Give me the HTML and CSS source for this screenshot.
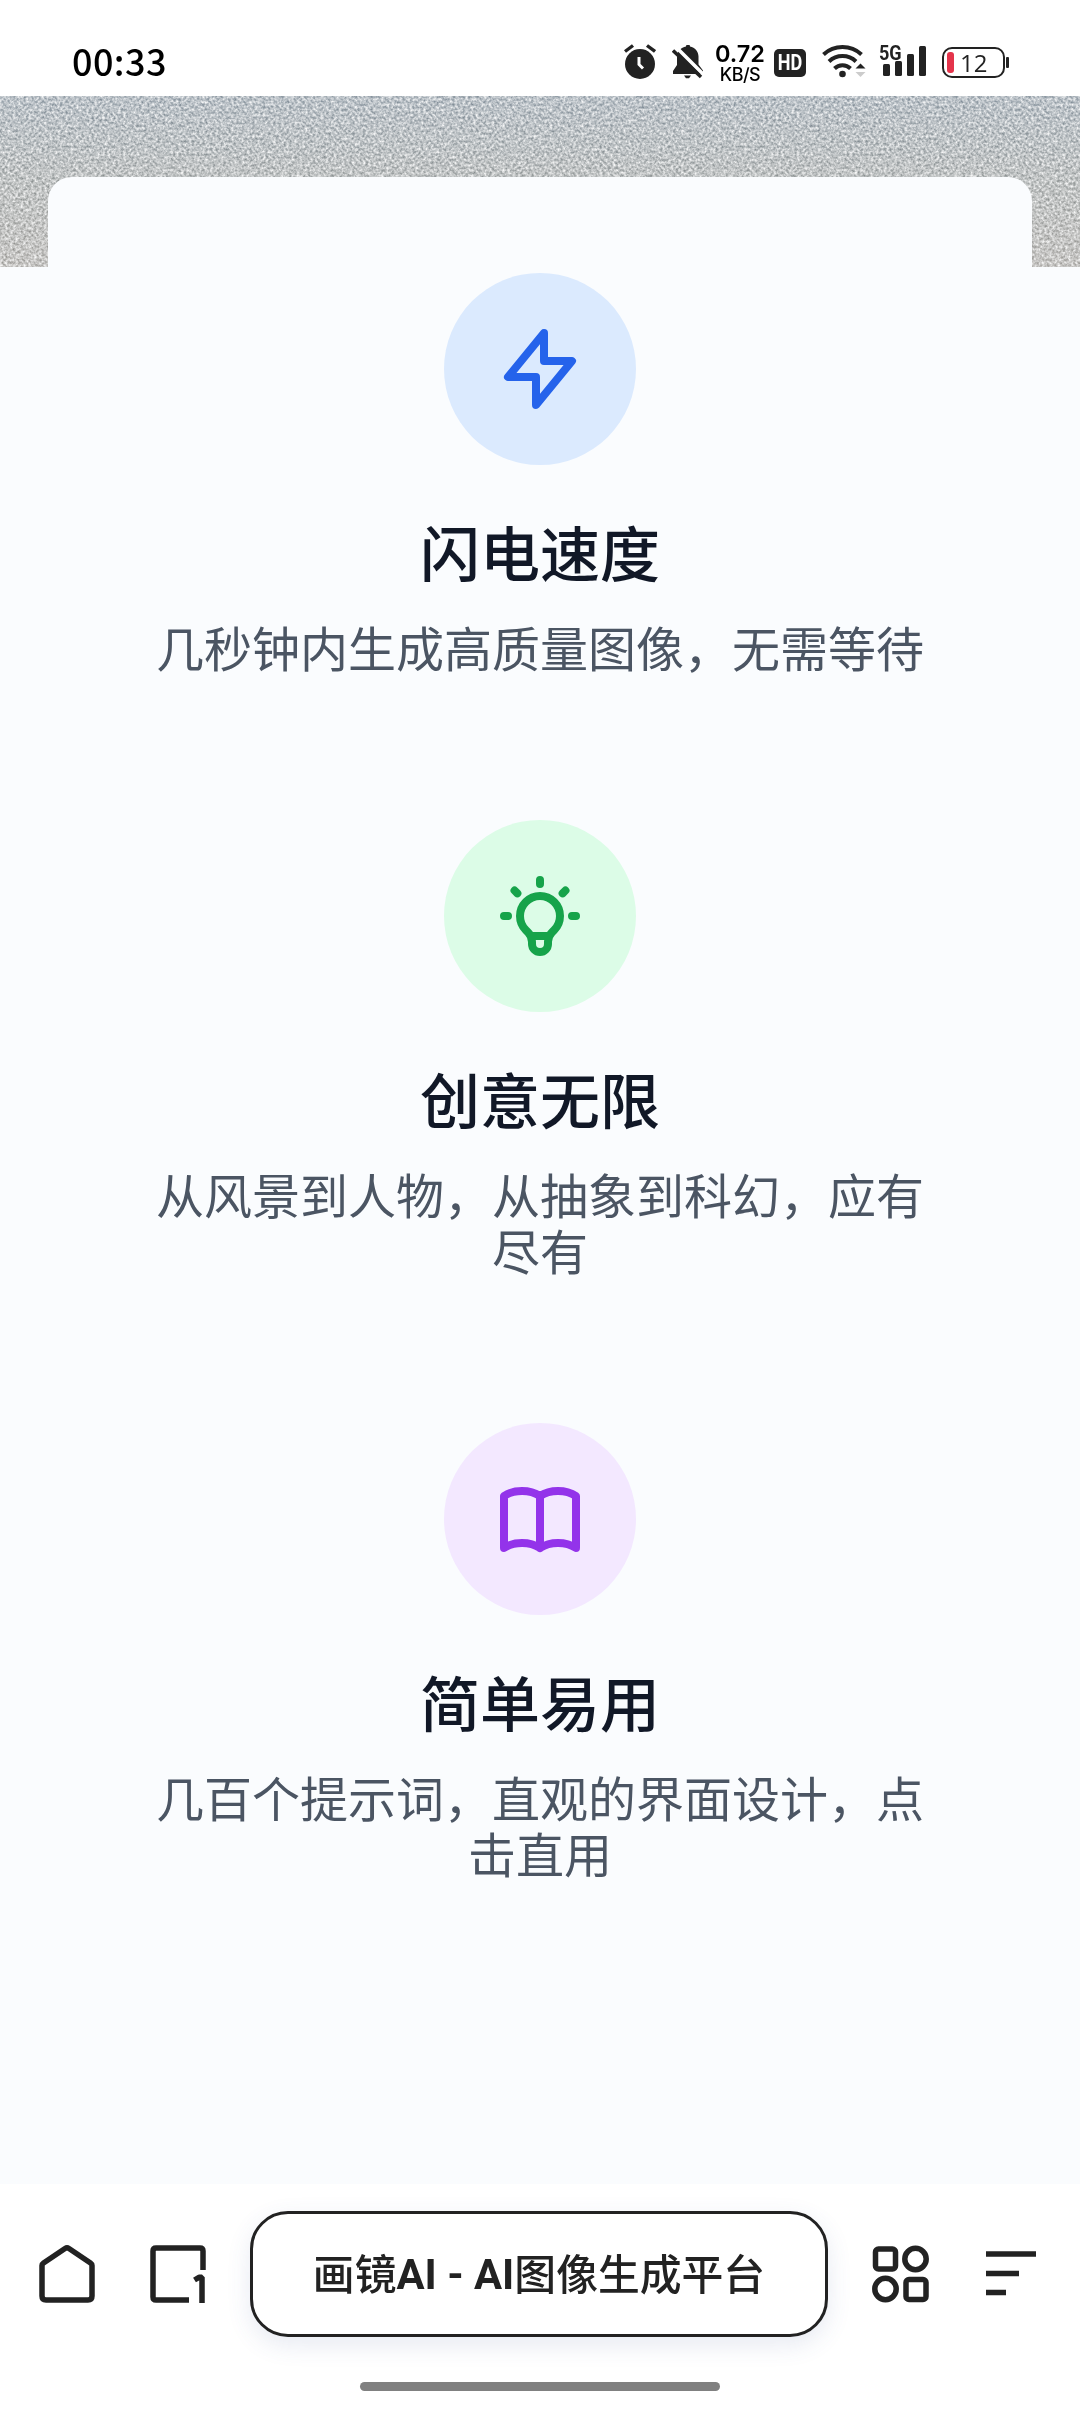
FILE: index.html
```html
<!DOCTYPE html>
<html lang="zh-CN">
<head>
<meta charset="utf-8">
<title>画镜AI - AI图像生成平台</title>
<link rel="stylesheet" href="styles.css">
</head>
<body>
<div class="screen">
  <header class="status">
    <time class="clock">00:33</time>
    <div class="indicators">
      <svg class="alarm" width="32" height="36" viewBox="0 0 32 36" fill="none" stroke="#222" stroke-width="3.4"><circle cx="16" cy="20" r="15" fill="#222" stroke="none"/><path d="M1 7.5 9 1.5M31 7.5l-8-6"/><path d="M15 13v7.5l4 4" stroke="#fff" stroke-width="3"/></svg>
      <svg class="bell" width="32" height="34" viewBox="0 0 32 34" fill="#222"><path d="M14 1.5a2 2 0 0 1 4 0c5 1 8.500 5 8.500 10v8l4.500 6V29H1v-3l4-6v-8c0-5.500 4-9.500 9-10.500z"/><path d="M12 30.500h7l-2 2.800h-3z"/><path d="M0 3 31 34" stroke="#fff" stroke-width="3.500" transform="translate(2 -3)"/><path d="M1 5.500 29 32" stroke="#222" stroke-width="3.500"/></svg>
      <div class="speed"><span class="rate">0.72</span><span class="unit">KB/S</span></div>
      <span class="hd"><span>HD</span></span>
      <svg class="wifi" width="46" height="36" viewBox="0 0 46 36" fill="none" stroke="#222" stroke-width="4"><path d="M1.500 11.500a28 28 0 0 1 38 0M7 18.500a19.500 19.500 0 0 1 27 0M12.500 25.500a11.500 11.500 0 0 1 16 0"/><circle cx="20.500" cy="31" r="3.300" fill="#222" stroke="none"/><path d="m33.500 25.500 5-5 5 5z" fill="#222" stroke="none"/><path d="m33.500 29 5 5 5-5z" fill="#ccc" stroke="none"/></svg>
      <div class="signal"><span class="net">5G</span>
        <svg width="44" height="32" viewBox="0 0 44 32" fill="#222"><rect x="0" y="19" width="7" height="12" rx="1.500"/><rect x="12" y="16" width="7" height="15" rx="1.500"/><rect x="24" y="9" width="7" height="22" rx="1.500"/><rect x="36" y="1" width="7" height="30" rx="1.500"/></svg>
      </div>
      <div class="battery"><span class="level"></span><span class="pct">12</span></div>
      <span class="battery-tip"></span>
    </div>
  </header>

  <main class="page">
    <svg class="grain" width="1080" height="171" aria-hidden="true">
      <defs>
        <linearGradient id="tone" x1="0" y1="0" x2="0" y2="1"><stop offset="0" stop-color="#bac1c7"/><stop offset=".5" stop-color="#c0c3c3"/><stop offset="1" stop-color="#c6c5c3"/></linearGradient>
        <filter id="noise" x="0" y="0" width="100%" height="100%" color-interpolation-filters="sRGB"><feTurbulence type="fractalNoise" baseFrequency=".38" numOctaves="2" seed="7"/><feColorMatrix values="1.5 0 0 0 -.23  1.5 0 0 0 -.23  1.5 0 0 0 -.23  0 0 0 0 1"/></filter>
      </defs>
      <rect width="1080" height="171" fill="url(#tone)"/>
      <rect class="speckle" width="1080" height="171" filter="url(#noise)"/>
    </svg>
    <section class="card">
      <article class="feature">
        <div class="badge blue"><svg class="icon" viewBox="0 0 24 24"><path d="M13 10V3L4 14h7v7l9-11h-7z"/></svg></div>
        <h3>闪电速度</h3>
        <p>几秒钟内生成高质量图像，无需等待</p>
      </article>
      <article class="feature">
        <div class="badge green"><svg class="icon" viewBox="0 0 24 24"><path d="M9.663 17h4.673M12 3v1m6.364 1.636l-.707.707M21 12h-1M4 12H3m3.343-5.657l-.707-.707m2.828 9.900a5 5 0 117.072 0l-.548.547A3.374 3.374 0 0014 18.469V19a2 2 0 11-4 0v-.531c0-.895-.356-1.754-.988-2.386l-.548-.547z"/></svg></div>
        <h3>创意无限</h3>
        <p>从风景到人物，从抽象到科幻，应有尽有</p>
      </article>
      <article class="feature">
        <div class="badge purple"><svg class="icon" viewBox="0 0 24 24"><path d="M12 6.253v13m0-13C10.832 5.477 9.246 5 7.500 5S4.168 5.477 3 6.253v13C4.168 18.477 5.754 18 7.500 18s3.332.477 4.500 1.253m0-13C13.168 5.477 14.754 5 16.500 5c1.747 0 3.332.477 4.500 1.253v13C19.832 18.477 18.247 18 16.500 18c-1.746 0-3.332.477-4.500 1.253"/></svg></div>
        <h3>简单易用</h3>
        <p>几百个提示词，直观的界面设计，点击直用</p>
      </article>
    </section>
  </main>

  <nav class="toolbar">
    <div class="tools">
      <svg class="home" width="56" height="58" viewBox="0 0 56 58"><path d="M3 20.500Q3 19 4.500 18L26 3.500q2-1.200 4 0L51.500 18q1.500 1 1.500 2.500V51q0 4-4 4H7q-4 0-4-4z"/></svg>
      <svg class="tabs" width="56" height="58" viewBox="0 0 56 58"><path d="M39 55H6q-3 0-3-3V6q0-3 3-3h44q3 0 3 3v19"/><path d="M44.500 35 49 32.300h3V58" stroke-linejoin="bevel"/></svg>
      <div class="address">画镜<b>AI - AI</b>图像生成平台</div>
      <svg class="apps" width="58" height="58" viewBox="0 0 58 58"><rect x="3.500" y="4" width="20" height="20" rx="3"/><circle cx="43.500" cy="14" r="10.700"/><circle cx="13.500" cy="44" r="10.700"/><rect x="34" y="34.500" width="20" height="20" rx="3"/></svg>
      <svg class="menu" width="50" height="46" viewBox="0 0 50 46"><path d="M0 3h50M0 22.500h33M0 41.500h20"/></svg>
    </div>
    <div class="gesture"></div>
  </nav>
</div>
</body>
</html>
```
FILE: styles.css
```css
* { box-sizing: border-box; }
body { margin: 0; background: #fff; }
.screen {
  width: 1080px; height: 2412px; overflow: hidden;
  display: flex; flex-direction: column;
  font-family: Roboto, "Noto Sans CJK SC", sans-serif;
  color: #222;
}

/* status bar */
.status { height: 96px; display: flex; justify-content: space-between; padding: 0 71px 0 72px; }
.clock { font: 500 36px/1 "Noto Sans CJK SC", sans-serif; color: #000; padding-top: 42px; letter-spacing: .4px; }
.indicators { display: flex; align-items: flex-start; }
.alarm { margin-top: 44px; }
.bell { margin: 45px 0 0 16px; }
.speed { width: 50px; margin: 41px 0 0 11px; display: flex; flex-direction: column; align-items: center; color: #000; font-family: Inter, sans-serif; }
.rate { font-size: 23.5px; font-weight: 600; line-height: 25px; }
.unit { font-size: 18px; font-weight: 500; line-height: 18px; letter-spacing: -.5px; }
.hd { width: 32px; height: 28px; margin: 49px 0 0 9px; border-radius: 5px; background: #222; color: #fff; font: 700 22px/28px Roboto, sans-serif; display: flex; justify-content: center; }
.hd span { transform: scaleX(.82); }
.wifi { margin: 43px 0 0 16px; }
.signal { position: relative; width: 47px; height: 36px; margin: 45px 0 0 12px; display: flex; justify-content: flex-end; }
.net { position: absolute; left: -1px; top: -2px; font: 700 21px/20px Roboto, sans-serif; transform: scaleX(.86); transform-origin: left; }
.battery { width: 63px; height: 31px; margin: 47px 0 0 15px; border: 2.5px solid #222; border-radius: 10px; display: flex; align-items: center; padding-left: 3px; }
.level { width: 7px; height: 21px; border-radius: 3px; background: #e4344b; }
.pct { font: 400 24px/26px "Open Sans", sans-serif; margin-left: 6px; }
.battery-tip { width: 3px; height: 11px; margin: 57px 0 0 1px; border-radius: 1px; background: #222; }

/* page */
.page { position: relative; height: 2088px; background: #fafcfe; padding: 81px 48px 0; }
.grain { position: absolute; left: 0; top: 0; }
.speckle { mix-blend-mode: overlay; opacity: .85; }
.card { position: relative; background: #fafcfe; border-radius: 24px 24px 0 0; padding: 96px; display: flex; flex-direction: column; gap: 146px; }
.feature { display: flex; flex-direction: column; align-items: center; text-align: center; }
.badge { width: 192px; height: 192px; border-radius: 50%; display: flex; align-items: center; justify-content: center; }
.blue { background: #dbeafe; color: #2563eb; }
.green { background: #dcfce7; color: #16a34a; }
.purple { background: #f3e8ff; color: #9333ea; }
.icon { width: 96px; height: 96px; fill: none; stroke: currentColor; stroke-width: 2; stroke-linecap: round; stroke-linejoin: round; }
h3 { margin: 44px 0 25px; font: 500 60px/84px "Noto Sans CJK SC", sans-serif; color: #111827; }
p { margin: 0; font: 400 48px/56px "Noto Sans CJK SC", sans-serif; color: #4b5563; }

/* browser toolbar */
.toolbar { height: 228px; background: #fff; display: flex; flex-direction: column; align-items: center; }
.tools { width: 100%; padding: 27px 43px 0 39px; display: flex; align-items: center; }
.tools svg { fill: none; stroke: #222; stroke-width: 5.5; flex: none; }
.tabs { margin-left: 55px; }
.address { width: 578px; height: 126px; margin-left: 44px; padding-bottom: 2px; border: 3px solid #222; border-radius: 38px; background: #fff; box-shadow: 0 8px 24px rgba(60, 80, 150, .12); display: flex; align-items: center; justify-content: center; white-space: pre; font: 500 41.800px/1 "Noto Sans CJK SC", sans-serif; }
.address b { font-family: Roboto, sans-serif; font-weight: 700; padding-top: 3px; }
.apps { margin-left: 44px; }
.menu { margin-left: 56px; }
.gesture { width: 360px; height: 9px; margin-top: 45px; border-radius: 5px; background: #808080; }
```
